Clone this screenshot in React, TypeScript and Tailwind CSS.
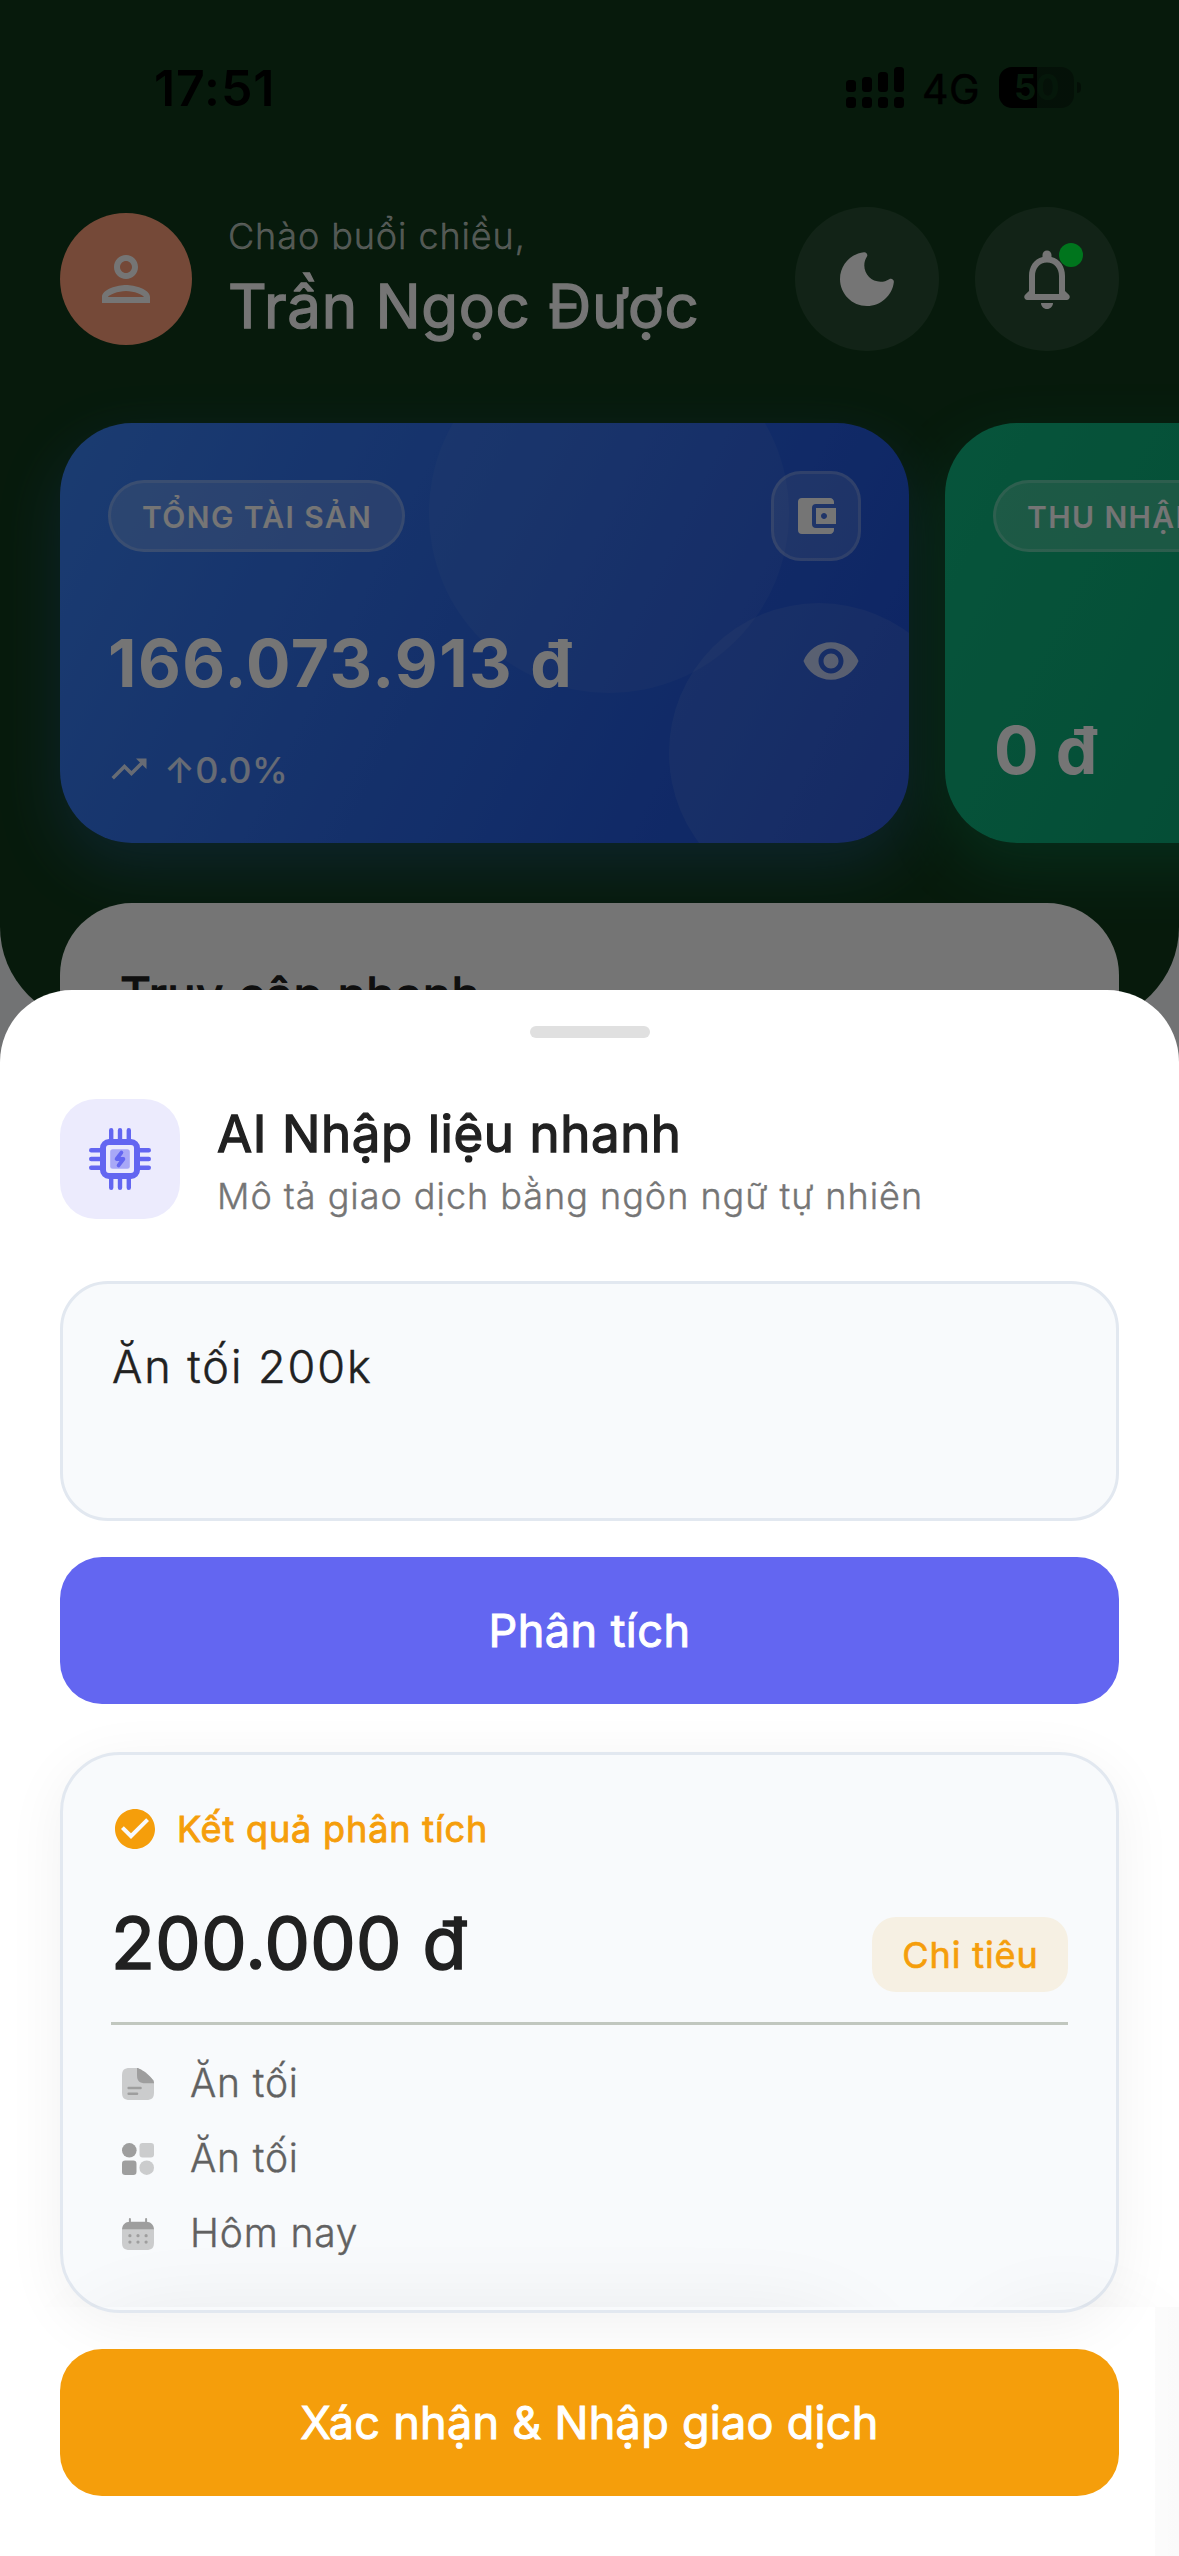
import React from "react";
import {
  MdAccountBalanceWallet,
  MdCheckCircle,
  MdOutlinePerson,
  MdTrendingUp,
  MdVisibility,
} from "react-icons/md";

const MoonIcon = () => (
  <svg className="size-[72px]" viewBox="0 0 24 24" fill="currentColor">
    <path d="M11.01 3.05C6.51 3.54 3 7.36 3 12c0 4.97 4.03 9 9 9 4.63 0 8.45-3.5 8.95-8 .09-.79-.78-1.42-1.54-.95-.84.54-1.84.85-2.91.85-2.98 0-5.4-2.42-5.4-5.4 0-1.06.31-2.06.84-2.89.45-.67-.04-1.63-.93-1.56z" />
  </svg>
);

const BellIcon = () => (
  <svg className="size-[72px]" viewBox="0 0 24 24" fill="currentColor">
    <path d="M19.29 17.29L18 16v-5c0-3.07-1.63-5.64-4.5-6.32V4c0-.83-.67-1.5-1.5-1.5s-1.5.67-1.5 1.5v.68C7.64 5.36 6 7.92 6 11v5l-1.29 1.29c-.63.63-.19 1.71.7 1.71h13.17c.9 0 1.34-1.08.71-1.71zM16 17H8v-6c0-2.48 1.51-4.5 4-4.5s4 2.02 4 4.5v6zm-4 5c1.1 0 2-.9 2-2h-4c0 1.1.89 2 2 2z" />
  </svg>
);

const ChipIcon = () => (
  <svg className="size-[64px] text-[#6366f1]" viewBox="0 0 64 64" fill="none">
    <g stroke="currentColor" strokeWidth="4.4" strokeLinecap="round">
      <path d="M23.2 3.2V14M32 3.2V14M40.8 3.2V14M23.2 50v10.8M32 50v10.8M40.8 50v10.8" />
      <path d="M3.2 23.2H14M3.2 32H14M3.2 40.8H14M50 23.2h10.8M50 32h10.8M50 40.8h10.8" />
    </g>
    <rect x="15" y="15" width="34" height="34" rx="6" stroke="currentColor" strokeWidth="6" />
    <rect x="22.2" y="22.2" width="19.6" height="19.6" rx="2.5" fill="currentColor" fillOpacity="0.5" />
    <path d="M33.4 25.6L28.6 32h6.8l-4.8 6.4" stroke="currentColor" strokeWidth="3.8" strokeLinecap="round" strokeLinejoin="round" />
  </svg>
);

const NoteIcon = () => (
  <svg className="size-8 text-[#9e9e9e]" viewBox="0 0 32 32" fill="currentColor">
    <path fillOpacity="0.5" d="M8 0h8l16 12.5V24c0 6-2 8-8 8H8c-6 0-8-2-8-8V8c0-6 2-8 8-8z" />
    <path d="M15 0c3.500 0 17 9.500 17 15.200h-8.500c-6 0-8.500-2.200-8.500-8z" />
    <path d="M6.600 20h12M6.600 25.800h8.500" stroke="currentColor" strokeWidth="2.400" strokeLinecap="round" />
  </svg>
);

const CategoryIcon = () => (
  <svg className="size-8 text-[#9e9e9e]" viewBox="0 0 32 32" fill="currentColor">
    <circle cx="7.300" cy="7.300" r="7.300" />
    <rect x="17.500" width="14.500" height="14.500" rx="3.200" fillOpacity="0.500" />
    <rect y="17.500" width="14.500" height="14.500" rx="3.200" />
    <circle cx="24.700" cy="24.700" r="7.300" fillOpacity="0.500" />
  </svg>
);

const CalendarIcon = () => (
  <svg className="size-8 text-[#9e9e9e]" viewBox="0 0 32 32" fill="currentColor">
    <path d="M7.900 1v4M24.100 1v4" stroke="currentColor" strokeWidth="2" strokeLinecap="round" />
    <path d="M0 11.500C.3 7 3 3.800 8 3.800h16c5 0 7.700 3.200 8 7.700z" />
    <path fillOpacity="0.500" d="M0 11.500h32V24c0 6-2 8-8 8H8c-6 0-8-2-8-8z" />
    {[7.9, 16, 24.1].map((x) => (
      <g key={x}>
        <circle cx={x} cy="17.700" r="1.600" />
        <circle cx={x} cy="24.100" r="1.600" />
      </g>
    ))}
  </svg>
);

const SignalBars = () => (
  <svg className="mr-[18px] h-[41px] w-[58px]" viewBox="0 0 58 41">
    {[13, 10, 5, 0].map((top, i) => (
      <g key={top}>
        <rect x={i * 16} y={top} width="10" height={25 - top} rx="3.500" />
        <rect x={i * 16} y="30" width="10" height="11" rx="3.500" />
      </g>
    ))}
  </svg>
);

const StatusBar = () => (
  <div className="flex h-[207px] items-start justify-between pt-[67px] pr-[98px] pl-[154px] text-black">
    <span className="text-[50px] leading-[43px] font-semibold tracking-[0.900px]">17:51</span>
    <div className="flex items-start">
      <SignalBars />
      <span className="w-[56px] text-[41px] leading-[44px] tracking-[0.500px] [-webkit-text-stroke:0.500px]">4G</span>
      <div className="ml-[21px] flex h-[41px] w-[75px] items-center justify-center rounded-[13px] bg-[linear-gradient(to_right,#000_38px,rgba(0,0,0,0.35)_38px)] text-[35px] leading-[41px] font-bold tracking-[-0.500px] text-[#0f3a1a]">
        <span>5</span>
        <span className="opacity-70">0</span>
      </div>
      <div className="mt-[15px] ml-[3px] h-[11px] w-1 rounded-r-full bg-black/40" />
    </div>
  </div>
);

const Header = () => (
  <div className="flex h-36 items-center px-[60px] text-white">
    <div className="flex size-[132px] items-center justify-center rounded-full bg-[#ffa07a]">
      <MdOutlinePerson className="size-[72px]" />
    </div>
    <div className="mt-[7px] ml-9 flex-1 self-start whitespace-nowrap">
      <div className="text-[36px] leading-[44px] font-light tracking-[0.900px] text-white/70 [-webkit-text-stroke:0.300px]">Chào buổi chiều,</div>
      <div className="mt-3 text-[60px] leading-[72px] tracking-[0.700px] [-webkit-text-stroke:1.300px]">Trần Ngọc Được</div>
    </div>
    <div className="flex gap-9">
      <div className="flex size-36 items-center justify-center rounded-full bg-white/10">
        <MoonIcon />
      </div>
      <div className="relative flex size-36 items-center justify-center rounded-full bg-white/10">
        <BellIcon />
        <div className="absolute top-9 right-9 size-6 rounded-full bg-[#00ff40]" />
      </div>
    </div>
  </div>
);

const Pill = ({ children }: { children: string }) => (
  <div className="flex h-[72px] w-[297px] items-center rounded-full border-[3px] border-white/20 bg-white/20 pt-0.5 pl-[31px] text-[30px] font-semibold tracking-[1.400px] whitespace-nowrap">
    {children}
  </div>
);

const BalanceCards = () => (
  <div className="mt-[72px] flex gap-9 pl-[60px] text-white">
    <div className="shrink-0 rounded-[72px] shadow-[0_24px_60px_rgba(59,130,246,0.300)]">
      <div className="relative flex h-[420px] w-[849px] flex-col overflow-hidden rounded-[72px] bg-[linear-gradient(116.300deg,#3b82f6,#1d4ed8)] p-12">
        <div className="absolute -top-[90px] right-[120px] size-[360px] rounded-full bg-white/5" />
        <div className="absolute right-[-60px] -bottom-[60px] size-[300px] rounded-full bg-white/8" />
        <div className="relative flex h-[90px] items-center justify-between">
          <Pill>TỔNG TÀI SẢN</Pill>
          <div className="flex size-[90px] items-center justify-center rounded-[30px] border-[3px] border-white/20 bg-white/15">
            <MdAccountBalanceWallet className="size-12" />
          </div>
        </div>
        <div className="relative mt-[57px] flex h-[90px] items-center justify-between">
          <span className="text-[66px] leading-[90px] font-bold tracking-[1.450px]">166.073.913 đ</span>
          <MdVisibility className="mb-[5px] size-[60px] text-white/70" />
        </div>
        <div className="relative mt-[38px] flex h-12 items-center gap-[14px] text-white/85">
          <MdTrendingUp className="mb-0.5 size-[42px]" />
          <span className="text-[36px] leading-[48px] font-medium tracking-[0.400px]">↑0.0%</span>
        </div>
      </div>
    </div>
    <div className="flex h-[420px] w-[849px] shrink-0 flex-col justify-between rounded-[72px] bg-[linear-gradient(116.300deg,#10b981,#059669)] p-12 shadow-[0_24px_60px_rgba(16,185,129,0.300)]">
      <div className="flex h-[90px] items-center">
        <Pill>THU NHẬP</Pill>
      </div>
      <span className="pl-px text-[66px] leading-[90px] font-bold tracking-[0.800px]">0 đ</span>
    </div>
  </div>
);

const HomePage = () => (
  <div className="h-full bg-[#f8fafc]">
    <div className="h-[1023px] overflow-hidden rounded-b-[96px] bg-[#103a1b]">
      <StatusBar />
      <Header />
      <BalanceCards />
    </div>
    <div className="relative mx-[60px] -mt-[120px] h-[420px] rounded-[72px] bg-white px-[60px] pt-[62px] text-[48px] leading-[60px] tracking-[0.500px] text-[#212121] [-webkit-text-stroke:1.300px]">
      Truy cập nhanh
    </div>
  </div>
);

const details = [
  { Icon: NoteIcon, label: "Ăn tối" },
  { Icon: CategoryIcon, label: "Ăn tối" },
  { Icon: CalendarIcon, label: "Hôm nay" },
];

const ResultCard = () => (
  <div className="mt-12 h-[561px] rounded-[60px] border-[3px] border-[#e2e8f0] bg-[#f8fafc] px-12 pt-[50px] shadow-[0_12px_60px_rgba(0,0,0,0.060)]">
    <div className="flex h-12 items-center gap-[18px] text-[#f59e0b]">
      <MdCheckCircle className="size-12" />
      <span className="text-[36px] leading-[48px] tracking-[0.850px] [-webkit-text-stroke:0.900px]">Kết quả phân tích</span>
    </div>
    <div className="mt-[46px] flex h-[93px] items-end justify-between">
      <span className="self-start text-[72px] leading-[88px] tracking-[0.400px] text-[#212121] [-webkit-text-stroke:1.700px]">200.000 đ</span>
      <span className="flex h-[75px] w-[196px] items-center justify-center rounded-3xl bg-[#f6f0e3] pl-px text-[36px] tracking-[0.890px] text-[#f59e0b] [-webkit-text-stroke:0.700px]">
        Chi tiêu
      </span>
    </div>
    <div className="mt-[30px] mb-[21px] h-[3px] bg-[#c1c7bf]" />
    {details.map(({ Icon, label }, i) => (
      <div key={i} className="flex h-[75px] items-center gap-9 pl-[11px] text-[39px] font-light tracking-[0.850px] text-[#616161] [-webkit-text-stroke:0.400px]">
        <Icon />
        {label}
      </div>
    ))}
  </div>
);

/* Soft shadow cast upward by the floating bar hidden behind the sheet's edge. */
const EdgeShadow = () => (
  <div className="pointer-events-none absolute inset-x-0 top-[1180px] h-[137px] overflow-hidden">
    <div className="absolute top-[150px] left-[72px] h-[180px] w-[800px] rounded-full shadow-[0_0_90px_rgba(0,0,0,0.080)]" />
    <div className="absolute top-[150px] left-[975px] size-[180px] rounded-full shadow-[0_0_90px_rgba(0,0,0,0.080)]" />
  </div>
);

const Sheet = () => (
  <div className="absolute inset-x-0 bottom-0 h-[1566px] overflow-hidden rounded-t-[72px] bg-white px-[60px] pt-9">
    <div className="mx-auto h-3 w-[120px] rounded-[6px] bg-[#e0e0e0]" />
    <div className="mt-[61px] flex h-[120px] gap-[37px]">
      <div className="flex size-[120px] items-center justify-center rounded-[36px] bg-[#ecebfd]">
        <ChipIcon />
      </div>
      <div className="pt-1 whitespace-nowrap">
        <div className="text-[51px] leading-[62px] tracking-[0.580px] text-[#212121] [-webkit-text-stroke:1.300px]">AI Nhập liệu nhanh</div>
        <div className="mt-[9px] text-[36px] leading-[44px] font-light tracking-[0.980px] text-[#757575] [-webkit-text-stroke:0.400px]">
          Mô tả giao dịch bằng ngôn ngữ tự nhiên
        </div>
      </div>
    </div>
    <div className="mt-[62px] h-60 rounded-[48px] border-[3px] border-[#e2e8f0] bg-[#f8fafc] px-[49px] pt-[51px] text-[45px] leading-[64px] font-light tracking-[1.950px] text-[#212121] [-webkit-text-stroke:0.500px]">
      Ăn tối 200k
    </div>
    <div className="mt-9 flex h-[147px] items-center justify-center rounded-[42px] bg-[#6366f1] text-[45px] tracking-[0.460px] text-white [-webkit-text-stroke:1px]">
      Phân tích
    </div>
    <ResultCard />
    <div className="relative mt-9 flex h-[147px] items-center justify-center rounded-[42px] bg-[#f59e0b] text-[45px] tracking-[0.280px] text-white [-webkit-text-stroke:1px]">
      Xác nhận &amp; Nhập giao dịch
    </div>
    <EdgeShadow />
    <div className="absolute right-0 bottom-0 h-[249px] w-6 bg-linear-to-r from-black/[0.015] to-black/[0.02]" />
  </div>
);

export default function App() {
  return (
    <div className="relative h-[2556px] w-[1179px] overflow-hidden font-['Inter',sans-serif]">
      <HomePage />
      <div className="absolute inset-0 bg-black/54" />
      <Sheet />
    </div>
  );
}
